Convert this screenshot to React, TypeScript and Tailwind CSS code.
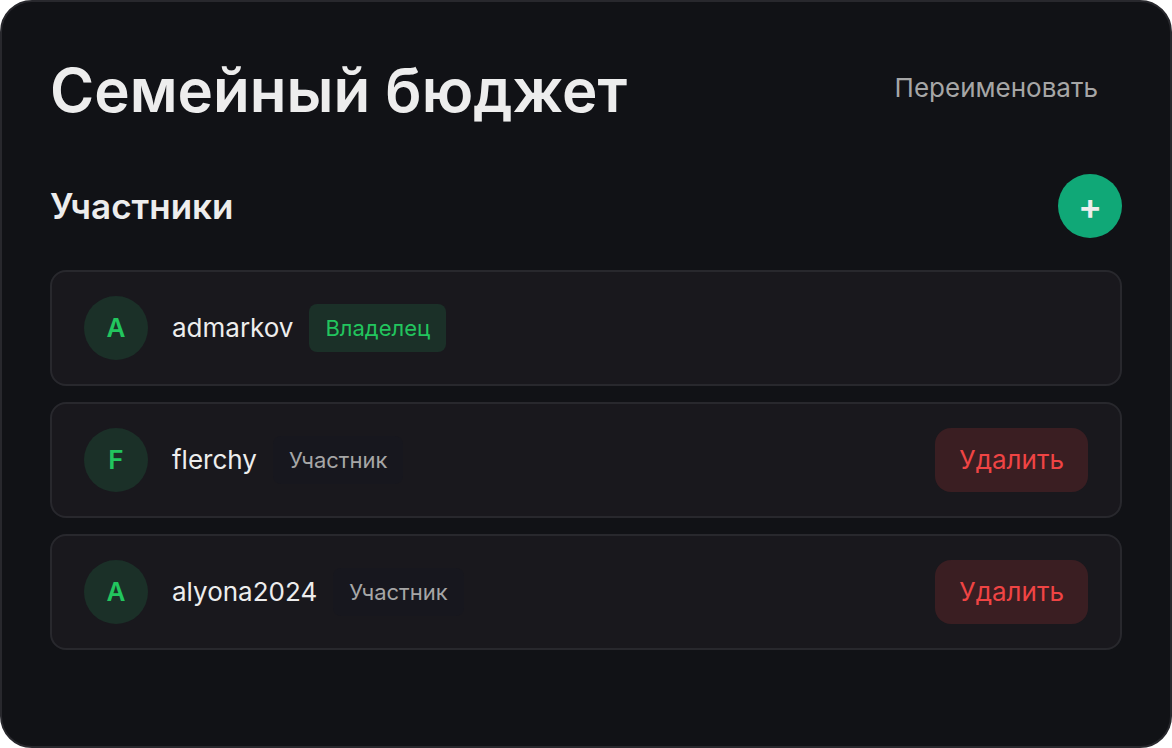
type Member = {
  name: string;
  owner: boolean;
};

const members: Member[] = [
  { name: "admarkov", owner: true },
  { name: "flerchy", owner: false },
  { name: "alyona2024", owner: false },
];

function MemberRow({ name, owner }: Member) {
  return (
    <li className="flex items-center justify-between rounded-2xl border-2 border-[#28282d] bg-[#19181d] px-8 py-6">
      <div className="flex items-center">
        <div className="mr-6 flex size-16 items-center justify-center rounded-full bg-[#1b3028] text-[26px] leading-9 font-semibold text-[#22c55e]">
          {name[0].toUpperCase()}
        </div>
        <span className="mr-4 text-[26px] leading-9 text-[#ededed]">
          {name}
        </span>
        <span
          className={
            owner
              ? "rounded-lg bg-[#1b3028] px-4 py-2 text-[22px] leading-8 text-[#22c55e]"
              : "rounded-lg bg-[#17171e] px-4 py-2 text-[22px] leading-8 text-[#a6a6a6]"
          }
        >
          {owner ? "Владелец" : "Участник"}
        </span>
      </div>
      {!owner && (
        <button
          type="button"
          className="h-16 rounded-2xl bg-[#3a1e22] px-6 text-[26px] leading-9 text-[#ef4444]"
        >
          Удалить
        </button>
      )}
    </li>
  );
}

export default function App() {
  return (
    <div className="min-h-screen bg-white font-['Inter',sans-serif]">
      <main className="min-h-screen rounded-[32px] border-2 border-[#28282d] bg-[#111216] p-12 text-[#ededed]">
        <header className="flex items-start justify-between">
          <h1 className="text-6xl leading-20 font-semibold">
            Семейный бюджет
          </h1>
          <button
            type="button"
            className="h-19 px-6 text-[26px] leading-9 text-[#a6a6a6]"
          >
            Переименовать
          </button>
        </header>

        <section className="mt-11">
          <div className="flex items-center justify-between">
            <h2 className="text-[35px] leading-10 font-semibold">Участники</h2>
            <button
              type="button"
              aria-label="Добавить участника"
              className="flex size-16 items-center justify-center rounded-full bg-[#10a877] text-4xl font-semibold"
            >
              +
            </button>
          </div>
          <ul className="mt-8 flex flex-col gap-4">
            {members.map((m) => (
              <MemberRow key={m.name} {...m} />
            ))}
          </ul>
        </section>
      </main>
    </div>
  );
}
